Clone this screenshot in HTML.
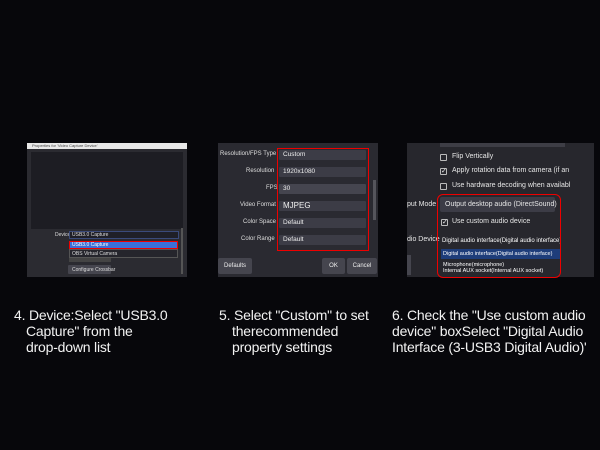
<!DOCTYPE html><html><head><style>
*{margin:0;padding:0;box-sizing:border-box}
body{width:600px;height:450px;background:#07070b;position:relative;overflow:hidden;font-family:"Liberation Sans",sans-serif}
.a{position:absolute}
.t{position:absolute;color:#f2f2f2;font-size:14px;line-height:16px;letter-spacing:-0.2px}
.s{font-size:5px;color:#ddd;position:absolute;white-space:nowrap}
.l{font-size:6px;color:#ddd;position:absolute;white-space:nowrap;text-align:right}
.dd{position:absolute;background:#3c3c46;border-radius:1px;color:#eee;font-size:6.5px;padding-left:4px;line-height:10px;height:10px}
.cb{position:absolute;width:7px;height:7px;border:1px solid #bbb;border-radius:1px;font-size:7px;line-height:6px;color:#eee;text-align:center}
.p3{font-size:7px;color:#e6e6e6;position:absolute;white-space:nowrap}
</style></head><body>
<!-- panel 1 -->
<div class="a" style="left:27px;top:143px;width:160px;height:134px;background:#2b2b31"></div>
<div class="a" style="left:27px;top:143px;width:160px;height:6px;background:#e8e8e8"></div>
<div class="s" style="left:32px;top:143px;font-size:4px;color:#444;line-height:6px">Properties for 'Video Capture Device'</div>
<div class="a" style="left:31px;top:152px;width:152px;height:77px;background:#1d1d23"></div>
<div class="l" style="left:55px;top:232px;font-size:5px">Device</div>
<div class="a" style="left:69px;top:231px;width:110px;height:8px;background:#1f1f27;border:1px solid #3a4a7a"></div>
<div class="s" style="left:72px;top:232px">USB3.0 Capture</div>
<div class="a" style="left:69px;top:241px;width:109px;height:8px;background:#3a6fd8;border:1px solid #e00"></div>
<div class="s" style="left:72px;top:242px;color:#fff">USB3.0 Capture</div>
<div class="a" style="left:69px;top:249px;width:109px;height:9px;background:#25252c;border:1px solid #555"></div>
<div class="s" style="left:72px;top:251px">OBS Virtual Camera</div>
<div class="a" style="left:69px;top:258px;width:42px;height:4px;background:#444"></div>
<div class="a" style="left:68px;top:265px;width:43px;height:9px;background:#45454e;border-radius:1px"></div>
<div class="s" style="left:72px;top:267px">Configure Crossbar</div>
<div class="a" style="left:181px;top:228px;width:2px;height:46px;background:#555"></div>
<!-- panel 2 -->
<div class="a" style="left:218px;top:143px;width:160px;height:134px;background:#2a2a31"></div>
<div class="l" style="left:220px;top:151px">Resolution/FPS Type</div>
<div class="l" style="left:246px;top:168px">Resolution</div>
<div class="l" style="left:266px;top:185px">FPS</div>
<div class="l" style="left:240px;top:202px">Video Format</div>
<div class="l" style="left:243px;top:219px">Color Space</div>
<div class="l" style="left:241px;top:236px">Color Range</div>
<div class="dd" style="left:279px;top:150px;width:87px">Custom</div>
<div class="dd" style="left:279px;top:167px;width:87px">1920x1080</div>
<div class="dd" style="left:279px;top:184px;width:87px;background:#45454f">30</div>
<div class="dd" style="left:279px;top:201px;width:87px;font-size:8px">MJPEG</div>
<div class="dd" style="left:279px;top:218px;width:87px">Default</div>
<div class="dd" style="left:279px;top:235px;width:87px">Default</div>
<div class="a" style="left:277px;top:148px;width:92px;height:103px;border:1px solid #e00"></div>
<div class="a" style="left:373px;top:180px;width:3px;height:40px;background:#55555c"></div>
<div class="a" style="left:218px;top:258px;width:34px;height:16px;background:#45454e;border-radius:2px;color:#eee;font-size:6px;text-align:center;line-height:16px">Defaults</div>
<div class="a" style="left:322px;top:258px;width:23px;height:16px;background:#45454e;border-radius:2px;color:#eee;font-size:6px;text-align:center;line-height:16px">OK</div>
<div class="a" style="left:347px;top:258px;width:30px;height:16px;background:#45454e;border-radius:2px;color:#eee;font-size:6px;text-align:center;line-height:16px">Cancel</div>
<!-- panel 3 -->
<div class="a" style="left:407px;top:143px;width:191px;height:134px;background:#27272d"></div>
<div class="a" style="left:440px;top:143px;width:125px;height:4px;background:#3d3d45"></div>
<div class="cb" style="left:440px;top:154px"></div>
<div class="p3" style="left:452px;top:153px">Flip Vertically</div>
<div class="cb" style="left:440px;top:168px">✓</div>
<div class="p3" style="left:452px;top:167px">Apply rotation data from camera (if an</div>
<div class="cb" style="left:440px;top:183px"></div>
<div class="p3" style="left:452px;top:182px">Use hardware decoding when availabl</div>
<div class="p3" style="left:407px;top:201px">put Mode</div>
<div class="a" style="left:440px;top:197px;width:115px;height:15px;background:#3c3c46;border-radius:2px"></div>
<div class="p3" style="left:445px;top:201px">Output desktop audio (DirectSound)</div>
<div class="cb" style="left:441px;top:219px">✓</div>
<div class="p3" style="left:452px;top:218px">Use custom audio device</div>
<div class="p3" style="left:407px;top:236px">dio Device</div>
<div class="p3" style="left:442px;top:238px;font-size:6px;color:#fff">Digital audio interface(Digital audio interface)</div>
<div class="a" style="left:441px;top:249px;width:120px;height:10px;background:#1e3d7a"></div>
<div class="p3" style="left:443px;top:251px;font-size:5.5px;color:#fff">Digital audio interface(Digital audio interface)</div>
<div class="p3" style="left:443px;top:262px;font-size:5.5px;color:#fff">Microphone(microphone)</div>
<div class="p3" style="left:443px;top:268px;font-size:5.5px;color:#fff">Internal AUX socket(Internal AUX socket)</div>
<div class="a" style="left:407px;top:255px;width:4px;height:20px;background:#45454e"></div>
<div class="a" style="left:437px;top:194px;width:124px;height:84px;border:1px solid #e00;border-radius:6px"></div>
<div class="a" style="left:594px;top:143px;width:4px;height:134px;background:#07070b"></div>
<!-- texts -->
<div class="t" style="left:14px;top:307px;width:180px">4. Device:Select "USB3.0<br><span style="padding-left:12px">Capture" from the</span><br><span style="padding-left:12px">drop-down list</span></div>
<div class="t" style="left:219px;top:307px;width:180px">5. Select "Custom" to set<br><span style="padding-left:13px">therecommended</span><br><span style="padding-left:13px">property settings</span></div>
<div class="t" style="left:392px;top:307px;width:215px;white-space:nowrap">6. Check the "Use custom audio<br>device" boxSelect "Digital Audio<br>Interface (3-USB3 Digital Audio)'</div>
</body></html>
